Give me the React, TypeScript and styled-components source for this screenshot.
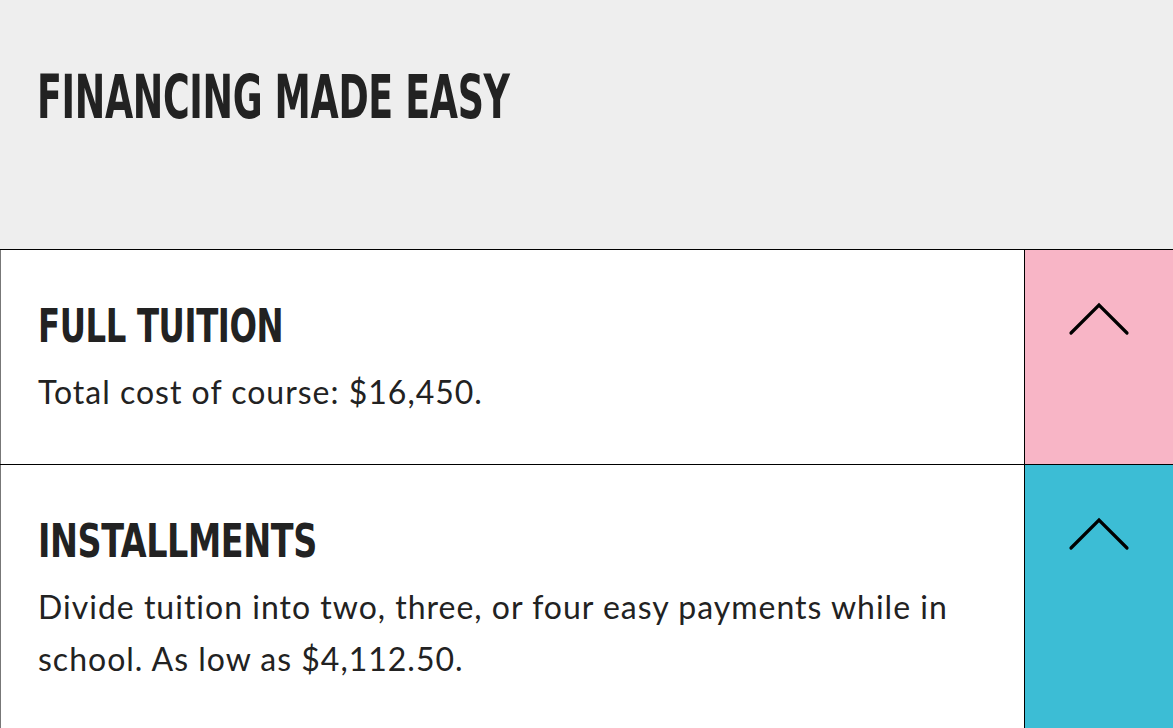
import React from 'react';
import styled, { createGlobalStyle } from 'styled-components';

const GlobalStyle = createGlobalStyle`
  body {
    margin: 0;
    background: #ffffff;
    font-family: Lato, "Open Sans", sans-serif;
    color: #222222;
  }
`;

// no condensed display face is installed, so squeeze the condensed DejaVu horizontally
const CONDENSED = `"DejaVu Sans Condensed", "DejaVu Sans", sans-serif`;

const Page = styled.div`
  width: 1173px;
  overflow: hidden;
`;

const Header = styled.header`
  background: #eeeeee;
  height: 249px;
  padding: 64px 37px 0;
  box-sizing: border-box;
`;

const Title = styled.h1`
  display: inline-block;
  margin: 0;
  font-family: ${CONDENSED};
  font-weight: 700;
  font-size: 60px;
  line-height: 66px;
  letter-spacing: -0.5px;
  color: #222222;
  text-transform: uppercase;
  white-space: nowrap;
  transform: scaleX(0.675);
  transform-origin: left center;
`;

const Plans = styled.section`
  border-top: 1px solid #000000;
`;

const Plan = styled.div`
  display: grid;
  grid-template-columns: 1025px 1fr;
  border-bottom: 1px solid #000000;
  min-height: 214px;

  &:last-child {
    min-height: 280px;
  }
`;

const PlanBody = styled.div`
  border-left: 1px solid #777777;
  border-right: 1px solid #000000;
  padding: 50px 38px 40px 37px;
`;

const PlanTitle = styled.h2<{ $squeeze: number }>`
  display: inline-block;
  margin: 0 0 14px;
  font-family: ${CONDENSED};
  font-weight: 700;
  font-size: 47px;
  line-height: 52px;
  letter-spacing: -0.5px;
  color: #222222;
  text-transform: uppercase;
  white-space: nowrap;
  transform: scaleX(${({ $squeeze }) => $squeeze});
  transform-origin: left center;
`;

const PlanText = styled.p`
  margin: 0;
  font-size: 32px;
  line-height: 52px;
  letter-spacing: 1px;
  color: #222222;
`;

const Toggle = styled.button<{ $color: string }>`
  display: flex;
  justify-content: center;
  align-items: flex-start;
  padding: 50px 0 0;
  border: none;
  background: ${({ $color }) => $color};
  cursor: pointer;
`;

const Chevron = () => (
  <svg width="62" height="36" viewBox="0 0 62 36" fill="none">
    <path d="M3 33 L31 5 L59 33" stroke="#000" strokeWidth="3.2" strokeLinecap="round" strokeLinejoin="miter" />
  </svg>
);

const plans = [
  {
    title: 'Full Tuition',
    text: 'Total cost of course: $16,450.',
    color: '#f8b5c6',
    squeeze: 0.765,
  },
  {
    title: 'Installments',
    text: 'Divide tuition into two, three, or four easy payments while in school. As low as $4,112.50.',
    color: '#3cbdd5',
    squeeze: 0.79,
  },
];

export default function App() {
  return (
    <Page>
      <GlobalStyle />
      <Header>
        <Title>Financing Made Easy</Title>
      </Header>
      <Plans>
        {plans.map((plan) => (
          <Plan key={plan.title}>
            <PlanBody>
              <div>
                <PlanTitle $squeeze={plan.squeeze}>{plan.title}</PlanTitle>
              </div>
              <PlanText>{plan.text}</PlanText>
            </PlanBody>
            <Toggle $color={plan.color} aria-label={`Toggle ${plan.title}`}>
              <Chevron />
            </Toggle>
          </Plan>
        ))}
      </Plans>
    </Page>
  );
}
